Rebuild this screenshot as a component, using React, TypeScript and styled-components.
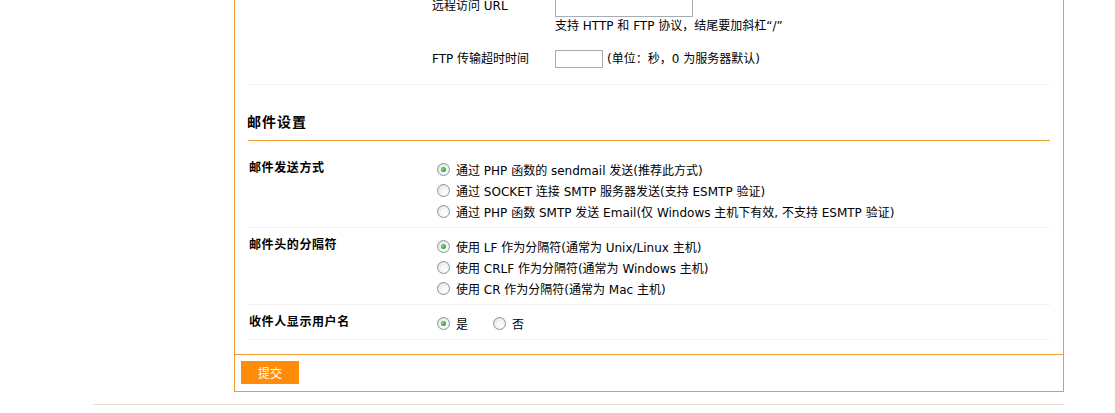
import React from 'react';
import styled, { createGlobalStyle } from 'styled-components';

const orange = '#ee9c30';

const GlobalStyle = createGlobalStyle`
  body {
    margin: 0;
    background: #fff;
    color: #000;
    font-family: Verdana, "DejaVu Sans", "Noto Sans CJK SC", sans-serif;
    font-size: 12px;
  }
`;

const Page = styled.div`
  width: 971px;
  margin-left: 93px;
`;

const Layout = styled.div`
  display: flex;
`;

const Sidebar = styled.div`
  width: 141px;
  flex: none;
`;

const Box = styled.div`
  flex: 1;
  margin-top: -3px;
  border: 1px solid ${orange};
  border-top: none;
`;

const FormArea = styled.div`
  padding: 0 13px 14px 13px;
`;

const Row = styled.div<{ $pad?: string }>`
  display: grid;
  grid-template-columns: 184px 1fr;
  padding: ${p => p.$pad || '8px 0 5px'};
  border-bottom: 1px solid #f1f1f1;
`;

const Label = styled.div`
  padding-left: 1px;
  line-height: 18px;
  font-weight: bold;
  letter-spacing: 0.6px;
`;

const Value = styled.div<{ $indent?: number }>`
  padding-left: ${p => p.$indent ?? 5}px;
`;

const SubRow = styled.div<{ $gap?: number; $center?: boolean }>`
  display: grid;
  grid-template-columns: 123px 1fr;
  align-items: ${p => (p.$center ? 'center' : 'start')};
  margin-top: ${p => p.$gap || 0}px;
  line-height: 18px;
`;

const TextInput = styled.input<{ $w: number; $h: number }>`
  display: block;
  box-sizing: border-box;
  width: ${p => p.$w}px;
  height: ${p => p.$h}px;
  border: 1px solid #a5acb2;
  padding: 0;
  margin: 0;
  background: #fff;
`;

const Inline = styled.div`
  display: flex;
  align-items: center;
`;

const Hint = styled.span<{ $ml?: number }>`
  margin-left: ${p => p.$ml || 0}px;
  line-height: 18px;
`;

const SectionTitle = styled.h3`
  margin: 0 0 10px;
  padding: 29px 0 10px;
  line-height: 16px;
  font-size: 14px;
  font-weight: bold;
  letter-spacing: 1px;
  text-indent: -1px;
  border-bottom: 1px solid ${orange};
`;

const Option = styled.label`
  display: flex;
  align-items: center;
  height: 21px;
  gap: 6px;
  white-space: nowrap;
`;

const Options = styled.div<{ $inline?: boolean }>`
  display: flex;
  flex-direction: ${p => (p.$inline ? 'row' : 'column')};
  gap: ${p => (p.$inline ? '25px' : '0')};
`;

const Radio = styled.span<{ $on?: boolean }>`
  position: relative;
  width: 13px;
  height: 13px;
  box-sizing: border-box;
  border-radius: 50%;
  border: 1px solid #8394ab;
  background: radial-gradient(circle at 65% 70%, #ffffff 0%, #f4f4f0 45%, #d9d9d2 100%);
  flex: none;
  &::after {
    content: '';
    display: ${p => (p.$on ? 'block' : 'none')};
    position: absolute;
    left: 3px;
    top: 3px;
    width: 5px;
    height: 5px;
    border-radius: 50%;
    background: radial-gradient(circle at 40% 40%, #8fe08f 0%, #2fa52f 60%, #1d861d 100%);
  }
`;

const ButtonBar = styled.div`
  border-top: 1px solid ${orange};
  padding: 6px 6px 7px;
`;

const Submit = styled.button`
  display: block;
  width: 58px;
  height: 23px;
  border: none;
  background: #ff8c0a;
  color: #fff;
  font-family: inherit;
  font-size: 12px;
  padding: 0;
`;

const Footer = styled.div`
  margin-top: 12px;
  border-top: 1px solid #e4dfd6;
  height: 8px;
`;

const RadioGroup: React.FC<{ items: string[]; checked: number; inline?: boolean }> = ({ items, checked, inline }) => (
  <Options $inline={inline}>
    {items.map((text, i) => (
      <Option key={i}>
        <Radio $on={i === checked} />
        <span>{text}</span>
      </Option>
    ))}
  </Options>
);

export default function App() {
  return (
    <>
      <GlobalStyle />
      <Page>
        <Layout>
          <Sidebar />
          <Box>
            <FormArea>
              <Row $pad="0 0 16px">
                <div />
                <Value $indent={0}>
                  <SubRow>
                    <span>远程访问 URL</span>
                    <div>
                      <TextInput $w={138} $h={20} />
                      <Hint>支持 HTTP 和 FTP 协议，结尾要加斜杠“/”</Hint>
                    </div>
                  </SubRow>
                  <SubRow $gap={15} $center>
                    <span>FTP 传输超时时间</span>
                    <Inline>
                      <TextInput $w={48} $h={18} />
                      <Hint $ml={4}>(单位：秒，0 为服务器默认)</Hint>
                    </Inline>
                  </SubRow>
                </Value>
              </Row>

              <SectionTitle>邮件设置</SectionTitle>

              <Row>
                <Label>邮件发送方式</Label>
                <Value>
                  <RadioGroup
                    checked={0}
                    items={[
                      '通过 PHP 函数的 sendmail 发送(推荐此方式)',
                      '通过 SOCKET 连接 SMTP 服务器发送(支持 ESMTP 验证)',
                      '通过 PHP 函数 SMTP 发送 Email(仅 Windows 主机下有效, 不支持 ESMTP 验证)',
                    ]}
                  />
                </Value>
              </Row>
              <Row>
                <Label>邮件头的分隔符</Label>
                <Value>
                  <RadioGroup
                    checked={0}
                    items={[
                      '使用 LF 作为分隔符(通常为 Unix/Linux 主机)',
                      '使用 CRLF 作为分隔符(通常为 Windows 主机)',
                      '使用 CR 作为分隔符(通常为 Mac 主机)',
                    ]}
                  />
                </Value>
              </Row>
              <Row>
                <Label>收件人显示用户名</Label>
                <Value>
                  <RadioGroup inline checked={0} items={['是', '否']} />
                </Value>
              </Row>
            </FormArea>
            <ButtonBar>
              <Submit type="button">提交</Submit>
            </ButtonBar>
          </Box>
        </Layout>
        <Footer />
      </Page>
    </>
  );
}
